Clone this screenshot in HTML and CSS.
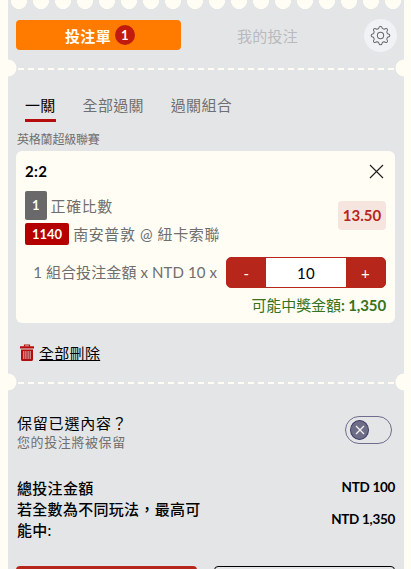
FILE: index.html
```html
<!DOCTYPE html>
<html lang="zh-Hant">
<head>
    <meta charset="UTF-8">
    <meta name="viewport" content="width=device-width, initial-scale=1.0">
    <title>投注單</title>
    <link rel="stylesheet" href="styles.css">
</head>
<body>
    <div class="ticket">
        <div class="scallops"></div>

        <div class="header">
            <button class="tab-main active">投注單 <span class="count">1</span></button>
            <button class="tab-main">我的投注</button>
            <button class="settings" aria-label="設定">
                <svg width="21" height="21" viewBox="0 0 24 24" fill="none" stroke="#66676b" stroke-width="1.15" stroke-linejoin="round">
                    <path d="M9.9 3.9 Q10.4 1.3 12 1.3 Q13.6 1.3 14.1 3.9 Q14.9 4.6 16.2 4.8 Q18.5 3.4 19.6 4.4 Q20.7 5.5 19.2 7.8 Q19.3 9.1 20.1 9.9 Q22.7 10.4 22.7 12 Q22.7 13.6 20.1 14.1 Q19.3 14.9 19.2 16.2 Q20.7 18.5 19.6 19.6 Q18.5 20.6 16.2 19.2 Q14.9 19.3 14.1 20.1 Q13.6 22.7 12 22.7 Q10.4 22.7 9.9 20.1 Q9.1 19.3 7.8 19.2 Q5.5 20.6 4.4 19.6 Q3.3 18.5 4.8 16.2 Q4.7 14.9 3.9 14.1 Q1.3 13.6 1.3 12 Q1.3 10.4 3.9 9.9 Q4.7 9.1 4.8 7.8 Q3.3 5.5 4.4 4.4 Q5.5 3.4 7.8 4.8 Q9.1 4.7 9.9 3.9 Z"/>
                    <circle cx="12" cy="12" r="3.6"/>
                </svg>
            </button>
        </div>

        <div class="divider"></div>

        <div class="tabs">
            <a class="tab active">一關</a>
            <a class="tab">全部過關</a>
            <a class="tab">過關組合</a>
        </div>

        <div class="league">英格蘭超級聯賽</div>

        <div class="card">
            <div class="card-top">
                <span class="selection">2:2</span>
                <svg class="close" width="15" height="15" viewBox="0 0 15 15" stroke="#222" stroke-width="1.2">
                    <path d="M1 1 L14 14 M14 1 L1 14"/>
                </svg>
            </div>
            <div class="bet">
                <div class="bet-info">
                    <div class="bet-line"><span class="tag gray">1</span>正確比數</div>
                    <div class="bet-line match"><span class="tag red">1140</span>南安普敦 @ 紐卡索聯</div>
                </div>
                <span class="odds">13.50</span>
            </div>
            <div class="stake">
                <span class="stake-label">1 組合投注金額 x NTD 10 x</span>
                <div class="stepper">
                    <button>-</button>
                    <span class="value">10</span>
                    <button>+</button>
                </div>
            </div>
            <div class="payout">可能中獎金額<b>: 1,350</b></div>
        </div>

        <div class="delete-all">
            <svg width="14" height="18" viewBox="0 0 14 18">
                <path d="M4.5 2.5 V1 H9.5 V2.5" fill="none" stroke="#b50d0d" stroke-width="1.2"/>
                <path d="M0 2.2 H14 V4.4 H0 Z M1 5.4 H13 V15.4 Q13 17 11.4 17 H2.6 Q1 17 1 15.4 Z" fill="#b50d0d"/>
                <path d="M3.8 7 V15 M5.9 7 V15 M8.1 7 V15 M10.2 7 V15" stroke="#e4e5e7" stroke-width=".8"/>
            </svg>
            <a>全部刪除</a>
        </div>

        <div class="divider second"></div>

        <div class="keep">
            <div>
                <div class="keep-title">保留已選內容？</div>
                <div class="keep-sub">您的投注將被保留</div>
            </div>
            <div class="toggle">
                <span class="knob">
                    <svg width="10" height="10" viewBox="0 0 10 10" stroke="#f3f1ee" stroke-width="1.3">
                        <path d="M1 1 L9 9 M9 1 L1 9"/>
                    </svg>
                </span>
            </div>
        </div>

        <div class="totals">
            <div class="total"><span class="total-label">總投注金額</span><span class="amount">NTD 100</span></div>
            <div class="total"><span class="total-label">若全數為不同玩法，最高可能中:</span><span class="amount">NTD 1,350</span></div>
        </div>

        <div class="actions">
            <button class="primary"></button>
            <button class="secondary"></button>
        </div>
    </div>
</body>
</html>
```
FILE: styles.css
```css
* {
    box-sizing: border-box;
}
body {
    margin: 0;
    padding: 0 7px 0 8px;
    background-color: #fffdf4;
    font-family: Lato, "Noto Sans CJK TC", sans-serif;
    font-size: 15px;
    letter-spacing: 0.3px;
    color: #6f6f6f;
}
button {
    border: none;
    padding: 0;
    font: inherit;
    letter-spacing: inherit;
    cursor: pointer;
}
svg {
    display: block;
    flex: none;
}
.ticket {
    height: 569px;
    overflow: hidden;
    background-color: #e4e5e7;
}
.scallops {
    height: 10px;
    background: radial-gradient(8.4px 9.4px at 11px 0, #fffdf4 94%, transparent 100%) repeat-x;
    background-size: 22px 10px;
}
.header {
    display: flex;
    align-items: center;
    padding: 8px 7px 1px 8px;
    height: 43px;
}
.tab-main {
    display: flex;
    align-items: center;
    justify-content: center;
    width: 165px;
    height: 30px;
    margin-right: 4px;
    border-radius: 4px;
    background: none;
    color: #b9babc;
}
.tab-main.active {
    background-color: #ff7b00;
    color: #fffdf4;
    font-weight: bold;
}
.count {
    width: 20px;
    height: 20px;
    margin-left: 4px;
    margin-right: -3px;
    border-radius: 50%;
    background-color: #c11b0f;
    font-size: 13px;
    line-height: 21px;
    text-align: center;
}
.settings {
    display: flex;
    align-items: center;
    justify-content: center;
    width: 33px;
    height: 33px;
    margin-left: auto;
    border-radius: 50%;
    background-color: #f1f2f5;
}
.divider {
    height: 18px;
    margin-top: 6px;
    background:
        radial-gradient(circle at 0 9px, #fffdf4 8px, transparent 8.8px),
        radial-gradient(circle at 100% 9px, #fffdf4 8px, transparent 8.8px),
        repeating-linear-gradient(90deg, #fffdf4 0 6px, transparent 6px 10px) 10px 9px / 376px 2px no-repeat;
}
.tabs {
    display: flex;
    gap: 27px;
    padding: 17px 17px 0;
}
.tab {
    height: 28px;
    line-height: 22px;
}
.tab.active {
    color: #000;
    border-bottom: 3px solid #b50d0d;
}
.league {
    padding-left: 9px;
    margin: 9px 0 3px;
    font-size: 12px;
    line-height: 17px;
    letter-spacing: -0.2px;
}
.card {
    height: 172px;
    margin: 0 9px 0 8px;
    padding: 9px 9px 0;
    border-radius: 6px;
    background-color: #fffdf4;
}
.card-top {
    display: flex;
    justify-content: space-between;
    height: 31px;
    line-height: 22px;
}
.selection {
    color: #000;
    font-weight: bold;
}
.close {
    margin: 4px 2px 0 0;
}
.bet {
    display: flex;
    justify-content: space-between;
}
.bet-line {
    display: flex;
    align-items: center;
    gap: 4px;
    height: 29px;
    line-height: 22px;
    letter-spacing: 0.6px;
}
.match {
    height: 22px;
    margin-top: 3px;
}
.tag {
    padding: 0 7px;
    border-radius: 2px;
    color: #fffdf4;
    font-size: 13px;
    font-weight: bold;
    line-height: 22px;
    letter-spacing: 0;
}
.tag.gray {
    line-height: 29px;
    background-color: #696969;
}
.tag.red {
    background-color: #b50000;
}
.odds {
    width: 48px;
    height: 29px;
    margin-top: 10px;
    border-radius: 4px;
    background-color: #f6e5df;
    color: #b6261b;
    font-weight: bold;
    line-height: 29px;
    text-align: center;
    letter-spacing: 0;
}
.stake {
    display: flex;
    align-items: center;
    justify-content: flex-end;
    gap: 9px;
    margin-top: 12px;
}
.stake-label {
    white-space: nowrap;
    line-height: 22px;
    margin-top: -2px;
    letter-spacing: 0.1px;
}
.stepper {
    display: flex;
    width: 160px;
    height: 31px;
    border: 1px solid #b6261b;
    border-radius: 5px;
    overflow: hidden;
    background-color: #b6261b;
}
.stepper button {
    width: 39px;
    background-color: #b6261b;
    color: #fffdf4;
}
.value {
    flex: 1;
    background-color: #fff;
    color: #000;
    line-height: 31px;
    text-align: center;
}
.payout {
    margin-top: 6px;
    color: #357321;
    line-height: 22px;
    text-align: right;
    letter-spacing: -0.1px;
}
.delete-all {
    display: flex;
    align-items: center;
    gap: 5px;
    margin-top: 19px;
    padding-left: 12px;
    height: 22px;
}
.delete-all a {
    color: #000;
    line-height: 22px;
    text-decoration: underline;
}
.divider.second {
    margin-top: 9px;
}
.keep {
    display: flex;
    justify-content: space-between;
    margin: 22px 12px 0 9px;
}
.keep-title {
    color: #000;
    line-height: 20px;
    letter-spacing: 0.8px;
}
.keep-sub {
    font-size: 13px;
    line-height: 18px;
    letter-spacing: 0.6px;
}
.toggle {
    display: flex;
    align-items: center;
    width: 47px;
    height: 28px;
    margin-top: 3px;
    padding-left: 4px;
    border: 1px solid #6f6d8d;
    border-radius: 14px;
}
.knob {
    display: flex;
    align-items: center;
    justify-content: center;
    width: 19px;
    height: 20px;
    border: 1px solid #3f3d65;
    border-radius: 50%;
    background-color: #6e6d88;
}
.totals {
    margin: 27px 9px 0;
    color: #000;
    font-weight: 500;
}
.total {
    display: flex;
    align-items: center;
    justify-content: space-between;
    line-height: 21px;
}
.total-label {
    max-width: 190px;
}
.amount {
    margin-top: -2px;
    font-size: 13.5px;
    font-weight: bold;
    letter-spacing: -0.3px;
}
.actions {
    display: flex;
    justify-content: space-between;
    margin: 25px 9px 0 8px;
}
.actions button {
    width: 181px;
    height: 40px;
    border-radius: 4px;
}
.primary {
    background-color: #b6261b;
}
.secondary {
    background-color: #e4e5e7;
    border: 1px solid #000;
}
```
